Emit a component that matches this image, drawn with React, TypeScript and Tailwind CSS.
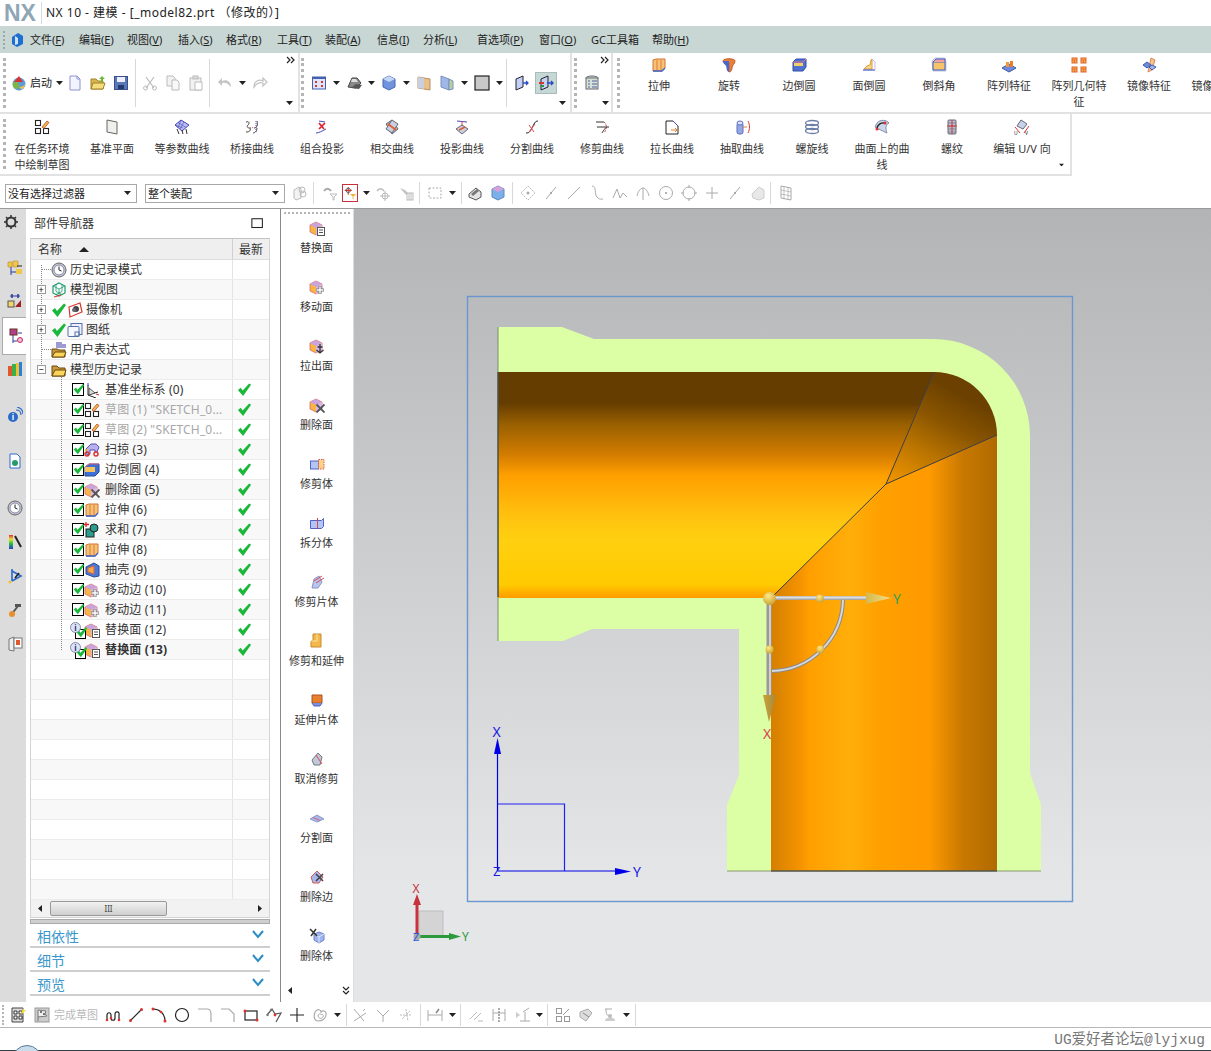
import React from "react";

type P = { children?: React.ReactNode; s?: number; cls?: string };
const Svg = ({ children, s = 16, cls = "" }: P) => (
  <svg width={s} height={s} viewBox="0 0 16 16" className={`shrink-0 ${cls}`}>{children}</svg>
);
const Caret = () => (
  <svg width="7" height="4" viewBox="0 0 7 4" className="shrink-0"><path d="M0 0h7L3.5 4z" fill="#222" /></svg>
);
const Chev = () => (
  <svg width="9" height="8" viewBox="0 0 9 8"><path d="M1 1l3 3-3 3M5 1l3 3-3 3" fill="none" stroke="#222" strokeWidth="1.2" /></svg>
);
const Grip = () => <div className="w-[3px] h-[50px] shrink-0 border-l-[3px] border-dotted border-[#b5b5b5]" />;
const Sep = ({ cls = "" }: { cls?: string }) => <div className={`w-px h-[22px] shrink-0 bg-[#d8d8d8] ${cls}`} />;
const Cell = ({ children, cls = "" }: { children?: React.ReactNode; cls?: string }) => (
  <div className={`w-[23px] shrink-0 flex justify-center items-center ${cls}`}>{children}</div>
);

const cube = (
  <>
    <path d="M1 5l6-3 6 3v7l-6 3-6-3z" fill="#f8b545" stroke="#db6a6a" strokeWidth=".8" />
    <path d="M1 5l6-3 6 3-6 3z" fill="#c9a3de" />
    <path d="M7 8v7l6-3V5z" fill="#d8b6e8" />
  </>
);
const oRep = <><rect x="8.5" y="7.5" width="7" height="8" fill="#fff" stroke="#555" /><path d="M10 10h4M10 12.5h4" stroke="#555" /></>;
const oMove = <><path d="M11 7v8M7 11h8" stroke="#777" strokeWidth="3" /><path d="M11 7.5v7M7.5 11h7" stroke="#fff" strokeWidth="1.4" /></>;
const oPull = <path d="M11 6v9M8.5 9h5M7.5 12l3.5 3 3.5-3" fill="none" stroke="#333" strokeWidth="1.3" />;
const oDel = <path d="M7.5 7.5l8 8M15.5 7.5l-8 8" stroke="#555" strokeWidth="1.8" />;

const ic: Record<string, React.ReactNode> = {
  replace: <>{cube}{oRep}</>,
  moveF: <>{cube}{oMove}</>,
  pull: <>{cube}{oPull}</>,
  delF: <>{cube}{oDel}</>,
  trimBody: <><rect x="1.5" y="5" width="8" height="8" fill="#b4c4f4" stroke="#4f63c8" /><rect x="9.5" y="3.5" width="5.5" height="9.5" fill="#fbd38a" stroke="#d9584f" strokeDasharray="1.5 1" /></>,
  split: <><path d="M1.5 5.5h11l2-2v8l-2 2h-11z" fill="#b4c4f4" stroke="#4f63c8" /><path d="M8.5 3v11" stroke="#d9484f" /></>,
  trimSheet: <><path d="M5 5l5-3 3 6-4 6H3z" fill="#b7c5f0" stroke="#8b96c4" /><path d="M5 7l8-5M7 9l8-5" stroke="#d9484f" /></>,
  trimExt: <><path d="M4 1h8v13H2V8h2z" fill="#f5b74a" stroke="#c98a2c" /><path d="M8 1v7H2" fill="none" stroke="#f7e3a7" /></>,
  extSheet: <><path d="M3 3h10v8H3z" fill="#e87e2e" stroke="#a85520" /><path d="M3 11l2 3h6l2-3" fill="#7f8fd8" stroke="#4f63c8" /></>,
  untrim: <><path d="M3 9l6-7 4 4-2 8-6 0z" fill="#c0c8dc" stroke="#777" /><path d="M7 4l6 9" stroke="#d9484f" /></>,
  divF: <><path d="M1 9l7-4 7 4-7 3z" fill="#a9b6ec" stroke="#8f9cc8" /><path d="M4 7.5l7 3" stroke="#d9484f" strokeWidth=".7" /></>,
  delEdge: <><path d="M2 8l6-6 6 6-4 6H4z" fill="#a9b6ec" stroke="#d9584f" /><path d="M7 5l7 7M14 5l-7 7" stroke="#444" strokeWidth="1.6" /></>,
  delBody: <><path d="M5 6l5-2 5 2v6l-5 3-5-3z" fill="#9db4ec" stroke="#6b82cc" /><path d="M10 9v6M5 6l5 3 5-3" fill="none" stroke="#dfe7fb" /><path d="M1 1l7 7M7 1L2 8" stroke="#333" strokeWidth="1.5" /></>,
  extrude: <><path d="M2 3l3-1h9v9l-3 3H2z" fill="#f5c27a" stroke="#d6732e" /><path d="M6 3v10M10 3v10" stroke="#e17d2e" /><path d="M2 14h9l3-3" fill="none" stroke="#3f63c8" strokeWidth="1.4" /></>,
  revolve: <><path d="M2 4c0-3 12-3 12 0 0 3-3 4-3 7 0 2-1 4-3 4V6C5 6 2 6 2 4z" fill="#e8803a" stroke="#c65a2c" /><path d="M2 4c0 3 2 3 3 5s0 5 3 6V4z" fill="#4a66cc" /></>,
  blend: <><path d="M2 5l3-3h10v8l-3 4H2z" fill="#5072cf" stroke="#2f4ea8" /><path d="M3 6h9v3H3z" fill="#f6cf6a" /><path d="M2 5h10l3-3" fill="none" stroke="#e9738a" /></>,
  faceBlend: <><path d="M11 2v10H3l3-3 3-1 1-5z" fill="#f8d98e" stroke="#d79a3a" /><path d="M2 13h12" stroke="#4f63c8" strokeWidth="1.3" /><path d="M11 2l3 3v8" fill="none" stroke="#c8b6e8" /></>,
  chamfer: <><path d="M1 4l3-3h10l1 4v9H2z" fill="#dbe6fb" stroke="#88a" strokeWidth=".5" /><path d="M2 5h12v8H2z" fill="#f7c46a" stroke="#3f63c8" /><path d="M2 5l3-3h9v3" fill="#f4a0a0" stroke="#3f63c8" /></>,
  patF: <><path d="M1 11l7-4 7 4-7 4z" fill="#6f8ad8" stroke="#3f5ab0" /><rect x="5" y="5" width="3" height="5" fill="#f59a35" /><rect x="9" y="4" width="3" height="6" fill="#e87e2e" /></>,
  patG: <>{[[1, 1], [10, 1], [1, 10], [10, 10]].map(([x, y], i) => <g key={i}><rect x={x} y={y} width="5" height="5" fill="#f9a84b" stroke="#e0642e" /><path d={`M${x} ${y + 2}h5M${x + 2.5} ${y + 2}v3`} stroke="#e0642e" strokeWidth=".7" /></g>)}</>,
  mirrorF: <><path d="M10 1l4 2-3 10-4 2z" fill="#f4c28a" stroke="#d98a5a" /><path d="M2 8l4-3 4 3-4 3z" fill="#6f8ad8" stroke="#3f5ab0" /><path d="M8 10l3-2 4 2-4 3z" fill="#9db4ec" stroke="#3f5ab0" /></>,
  sketch: <><g fill="#fff" stroke="#222" strokeWidth="1.1"><rect x="1.5" y="1.5" width="5" height="5" /><rect x="1.5" y="9.5" width="5" height="5" /><rect x="9.5" y="9.5" width="5" height="5" /></g><path d="M8 8l5-6 2 1.5-5 6z" fill="#f1b94a" stroke="#b9492e" strokeWidth=".8" /></>,
  plane: <path d="M3 1l10 2v12L3 13z" fill="#eef0ec" stroke="#666" />,
  iso: <><path d="M1 6l6-5 8 5-7 6z" fill="#b8bdf2" stroke="#4a46b8" /><path d="M4 3.5l8 5M7 1l-3 8M10 3l-4 7M1 6l8 3" stroke="#4a46b8" strokeWidth=".6" /><path d="M3 10l2 5M8 11l1 4M12 10l1 5" stroke="#333" /></>,
  bridge: <><path d="M2 3c3-1 4 1 2 3s0 3 2 3M2 13c3 0 5-1 4-4M10 9c3 0 4-3 3-7M9 14c1 0 4-1 4-5" fill="none" stroke="#444" /><path d="M6 9c2 0 2-1 4 0" stroke="#d9484f" fill="none" strokeDasharray="1 1" /><path d="M12 2v12" stroke="#4a46b8" strokeDasharray="1 1" /></>,
  combo: <><path d="M5 2l6 1" stroke="#4a46b8" /><path d="M2 14c3 0 6-2 10-4" fill="none" stroke="#4a46b8" /><path d="M5 4l5 6M11 4l-6 6" stroke="#e0202e" strokeWidth="1.7" /></>,
  inter: <><path d="M2 5l6-4 6 9-6 5z" fill="#b6bccb" stroke="#667" /><path d="M8 1l6 4-6 9-6-4z" fill="#c8cfe0" stroke="#667" /><path d="M4 5l8 6" stroke="#e05a2e" strokeWidth="1.6" /></>,
  proj: <><path d="M3 2l10 1" stroke="#4a46b8" /><path d="M8 2v6" stroke="#d9484f" /><path d="M2 10l6-4 6 4-6 5z" fill="#c8cfe0" stroke="#667" /><path d="M5 11l6-3" stroke="#e05a2e" strokeWidth="1.5" /></>,
  divide: <><path d="M2 14c3 0 4-1 6-5s3-7 6-7" fill="none" stroke="#222" /><path d="M5 6l5 7M11 5l-6 8" stroke="#d9484f" /></>,
  trim: <><path d="M2 3h8M3 8h12" stroke="#333" /><path d="M10 3c3 2 3 7 0 11" fill="none" stroke="#d9484f" strokeDasharray="2 1" /><path d="M8 14c1-2 4-6 5-6" stroke="#333" fill="none" /></>,
  extend: <><path d="M2 15V2h7l5 5v8z" fill="#fff" stroke="#222" /><path d="M9 2l5 5" stroke="#4a46b8" /><path d="M7 11h6M11 9l2 2-2 2" fill="none" stroke="#e8802e" /></>,
  extract: <><rect x="3" y="4" width="6" height="11" rx="2" fill="#95a8e4" stroke="#5a6ec0" /><ellipse cx="6" cy="4" rx="3" ry="2" fill="#dbe3fb" stroke="#5a6ec0" /><path d="M14 2c2 4 2 8 0 12" fill="none" stroke="#e0342e" /><path d="M9 8h4" stroke="#e8802e" /></>,
  helix: <><ellipse cx="8" cy="4" rx="6.5" ry="2.5" fill="none" stroke="#6d7ea8" strokeWidth="1.3" /><ellipse cx="8" cy="8" rx="6.5" ry="2.5" fill="none" stroke="#6d7ea8" strokeWidth="1.3" /><ellipse cx="8" cy="12" rx="6.5" ry="2.5" fill="none" stroke="#6d7ea8" strokeWidth="1.3" /></>,
  onSurf: <><path d="M3 4c3-4 10-3 12 0-3 1-4 5-2 10-4-2-9-4-12-6z" fill="#cdd7ea" stroke="#7f8cb0" /><path d="M3 10C3 6 7 3 11 4" fill="none" stroke="#222" strokeWidth="1.3" /><circle cx="11" cy="4" r="1.5" fill="#d9342e" /><circle cx="3" cy="10" r="1.5" fill="#d9342e" /></>,
  thread: <><rect x="4" y="1" width="8" height="14" rx="1" fill="#b6bfd4" stroke="#667" /><path d="M4 4h8M4 7h8M4 10h8M4 13h8" stroke="#778" strokeWidth=".7" /><path d="M8 1v14" stroke="#d9342e" /><path d="M3 7h10" stroke="#d9342e" /></>,
  uv: <><path d="M7 1l6 4-4 5-6-3z" fill="#c8d2ea" stroke="#667" /><path d="M1 8l5 6M15 7l-5 7" stroke="#d9342e" /><text x="0" y="16" fontSize="5" fill="#222">U</text><text x="11" y="16" fontSize="5" fill="#222">V</text></>,
  globe: <><circle cx="8" cy="9" r="6.5" fill="#5b9bd8" /><path d="M2 8c2-3 5-1 6 1s-1 5-3 5-4-3-3-6z" fill="#7fb548" /><path d="M3 7L8 1l4 6z" fill="#d9342e" /><path d="M8 12c3 0 5-1 6-3 0 3-2 5-4 5z" fill="#f0c24a" /></>,
  doc: <><path d="M3 1h7l3 3v11H3z" fill="#f3f4ff" stroke="#8d95d0" /><path d="M10 1v3h3" fill="none" stroke="#8d95d0" /></>,
  folderO: <><path d="M1 4h5l2 2h5v8H1z" fill="#d9b44a" stroke="#a0822c" /><path d="M1 14l2-6h12l-2 6z" fill="#f5dc7c" stroke="#a0822c" /><path d="M9 4l3-3 3 3h-2v3h-2V4z" fill="#6cba3a" /></>,
  save: <><rect x="1.5" y="1.5" width="13" height="13" fill="#5a78b8" stroke="#3a5088" /><rect x="4" y="2" width="8" height="5" fill="#eef" /><rect x="5" y="10" width="6" height="4" fill="#233a70" /></>,
  cut: <><path d="M4 13l8-11M12 13L4 2" stroke="#bbb" strokeWidth="1.2" /><circle cx="3.5" cy="13" r="2" fill="none" stroke="#bbb" /><circle cx="12.5" cy="13" r="2" fill="none" stroke="#bbb" /></>,
  copy: <><path d="M2 1h6l2 2v8H2z" fill="#f2f2f2" stroke="#bbb" /><path d="M7 5h5l2 2v8H7z" fill="#f8f8f8" stroke="#bbb" /></>,
  paste: <><rect x="2" y="3" width="11" height="12" fill="#f2f2f2" stroke="#bbb" /><rect x="5" y="1" width="5" height="3" fill="#ddd" stroke="#bbb" /><path d="M7 7h7v8H7z" fill="#fff" stroke="#bbb" /></>,
  undo: <path d="M14 12C14 6 9 4 5 6V3L1 7l4 4V8c3-1 6 0 9 4z" fill="#c4c4c4" />,
  redo: <path d="M2 12C2 6 7 4 11 6V3l4 4-4 4V8C8 7 5 8 2 12z" fill="none" stroke="#c4c4c4" strokeWidth="1.3" />,
  view: <><rect x="1.5" y="2" width="13" height="12" fill="#dfe6fb" stroke="#4560b0" /><rect x="1.5" y="2" width="13" height="2" fill="#4560b0" /><path d="M4 6h2v2H4zM10 6h2v2h-2zM4 10h2v2H4zM10 10h2v2h-2z" fill="#d9342e" /></>,
  shade: <><path d="M1 12l4-9h5l4 5-5 5z" fill="#888" stroke="#444" /><path d="M9 9l6 1-3 4-8-1z" fill="#555" /><path d="M5 4h4l2 3H4z" fill="#ddd" /></>,
  box: <><path d="M2 4l6-3 6 3v8l-6 3-6-3z" fill="#6f93dd" stroke="#4a66b0" /><path d="M2 4l6 3 6-3-6-3z" fill="#c5d5f5" /></>,
  sect: <><path d="M2 2l12 2v11L2 13z" fill="#e8c088" stroke="#b89060" /><path d="M2 2l6 1v11l-6-1z" fill="#c8cfe0" /></>,
  sect2: <><path d="M2 1l8 3v11l-8-3z" fill="#9fb8e8" stroke="#7a8fc0" /><path d="M10 4l4 2v8l-4 1z" fill="#b8d0a0" stroke="#7a8fc0" /></>,
  blackBox: <rect x="1" y="1" width="14" height="14" fill="#c8c8c8" stroke="#222" strokeWidth="1.2" />,
  door: <><path d="M3 4l7-3v11l-7 3z" fill="#c5d0f5" stroke="#223" /><path d="M10 8h5M13 6l2 2-2 2" fill="none" stroke="#2a4ac8" strokeWidth="1.3" /></>,
  door2: <><path d="M3 4l7-3v11l-7 3z" fill="#c5d0f5" stroke="#223" /><path d="M1 8h5" stroke="#d9342e" strokeWidth="2" /><path d="M3 11h3" stroke="#1f9c3a" strokeWidth="2" /><path d="M9 8h6M13 6l2 2-2 2" fill="none" stroke="#2a4ac8" strokeWidth="1.4" /></>,
  layers: <><ellipse cx="8" cy="3" rx="6" ry="2" fill="#cfd8c8" stroke="#667" /><rect x="2" y="3" width="12" height="11" fill="#d8e2d4" stroke="#667" /><path d="M4 6h2M8 6h5M4 9h2M8 9h5M4 12h2M8 12h5" stroke="#5060a0" /></>,
  ghost: <><path d="M2 5l5-3 2 2v9l-5 2-2-2z" fill="#f2f2f2" stroke="#bbb" /><circle cx="10" cy="5" r="3" fill="none" stroke="#bbb" /><circle cx="11" cy="9" r="3" fill="none" stroke="#bbb" /></>,
  filter: <><path d="M2 6c2-3 5-3 7 0" fill="none" stroke="#aaa" strokeWidth="2" /><path d="M8 9h7l-3 3v3h-1v-3z" fill="none" stroke="#bbb" /></>,
  filter2: <><path d="M6 1v9M2 5h8" stroke="#d9342e" strokeWidth="1.2" /><circle cx="6" cy="5" r="2.5" fill="none" stroke="#555" /><path d="M8 9h7l-3 3v3h-1v-3z" fill="#efb32e" /></>,
  snapCurve: <><path d="M2 6c2-3 5-3 7 0" fill="none" stroke="#bbb" strokeWidth="1.5" /><circle cx="10" cy="11" r="3" fill="none" stroke="#bbb" /><path d="M10 6v10M5 11h10" stroke="#bbb" /></>,
  snapBlock: <><path d="M2 3l5 2 3 3-2 2z" fill="#c4c4c4" /><rect x="9" y="8" width="6" height="7" fill="none" stroke="#bbb" /><path d="M11 8v7M13 8v7" stroke="#bbb" /></>,
  dash: <rect x="2" y="3" width="12" height="10" fill="none" stroke="#aaa" strokeDasharray="2 1.5" />,
  hood: <><path d="M2 9l7-6 5 4v5l-5 3-7-3z" fill="#e4e4e4" stroke="#555" /><path d="M4 9l6-5 2 2-6 5z" fill="#777" /></>,
  cubeB: <><path d="M2 4l6-3 6 3v8l-6 3-6-3z" fill="#7cb0e8" stroke="#5a8ac0" /><path d="M2 4l6 3 6-3-6-3z" fill="#d8a0d8" /></>,
  netGray: <><path d="M8 1l7 7-7 7-7-7z" fill="none" stroke="#bbb" strokeDasharray="2 1" /><circle cx="8" cy="8" r="1.5" fill="#aaa" /></>,
  lineG: <><path d="M3 14L13 2" stroke="#aaa" /><circle cx="8" cy="8" r="1" fill="#999" /></>,
  lineG2: <path d="M2 14L14 2" stroke="#aaa" />,
  curveG: <path d="M3 1c5 0 2 8 5 11s3 2 6 2" fill="none" stroke="#aaa" />,
  zigG: <path d="M1 13l4-9 3 9 3-5 4 4" fill="none" stroke="#aaa" />,
  arrowsG: <path d="M8 15V3M2 11c1-5 4-8 6-8s5 3 6 8" fill="none" stroke="#aaa" />,
  cirC: <><circle cx="8" cy="8" r="6.5" fill="none" stroke="#aaa" /><circle cx="8" cy="8" r="1" fill="#999" /></>,
  cirP: <><circle cx="8" cy="8" r="6" fill="none" stroke="#aaa" /><path d="M8 0v3M8 13v3M0 8h3M13 8h3" stroke="#aaa" /></>,
  plusG: <path d="M8 2v12M2 8h12" stroke="#aaa" />,
  hoodG: <path d="M2 9l7-7 5 3v8l-5 2-6-2z" fill="#e8e8e8" stroke="#ccc" />,
  grid: <><path d="M3 1l10 2v12L3 13z" fill="#fff" stroke="#aaa" /><path d="M3 5l10 2M3 9l10 2M6 2v12M10 2v12" stroke="#aaa" strokeWidth=".7" /></>,
  clock: <><circle cx="8" cy="8" r="7" fill="#c8ccd8" stroke="#666" /><circle cx="8" cy="8" r="5" fill="#fff" stroke="#88a" /><path d="M8 4.5V8l2.5 1" fill="none" stroke="#222" /></>,
  modelV: <><path d="M8 1l6 3v7l-6 3-6-3V4z" fill="#fff" stroke="#1d9a6c" strokeWidth="1.2" /><path d="M2 4l6 3 6-3M8 7v7M5 2.5v7l6 3M11 2.5v7l-6 3" fill="none" stroke="#1d9a6c" strokeWidth=".8" /><path d="M3 15l7-2" stroke="#e0342e" /></>,
  camera: <><path d="M2 5l11-4 2 9-12 5z" fill="#fff" stroke="#d9342e" strokeWidth="1.2" /><circle cx="9" cy="7" r="3" fill="#444" /><circle cx="7" cy="8" r="2" fill="#667" /></>,
  drawing: <><rect x="4" y="1.5" width="11" height="11" fill="#eef" stroke="#5570a8" /><rect x="1" y="4.5" width="11" height="10" rx="1" fill="#f7f8ff" stroke="#5570a8" /><rect x="8" y="10" width="4" height="4" fill="none" stroke="#5570a8" /></>,
  folder: <><path d="M1 4h5l2 2h6v8H1z" fill="#c8983a" stroke="#6a4a10" /><path d="M1 14l3-6h11l-2 6z" fill="#fbd45c" stroke="#6a4a10" /></>,
  folderX: <><path d="M5 1h6M5 3h10M5 5h10" stroke="#3a3aa8" /><path d="M1 7h5l2 1h6v7H1z" fill="#c8983a" stroke="#6a4a10" /><path d="M1 15l3-5h11l-2 5z" fill="#fbd45c" stroke="#6a4a10" /></>,
  csys: <><path d="M4 13L4 3M4 13l10-3M4 13l8 3" stroke="#222" /><path d="M4 1v3" stroke="#2a4ac8" /><path d="M5 6l6 5-6 2z" fill="#ddd" stroke="#555" /><path d="M12 12l3 1" stroke="#d9342e" /></>,
  sweep: <><path d="M2 7l5-5h5l3 3-2 5h-2V8H6v4L3 13z" fill="#b8b0f0" stroke="#5a50b8" /><circle cx="3" cy="12" r="2" fill="none" stroke="#e0342e" strokeWidth="1.5" /><circle cx="12" cy="12" r="2" fill="none" stroke="#e0342e" strokeWidth="1.5" /><path d="M1 9l3-2" stroke="#f0c02e" strokeWidth="1.3" /></>,
  blendT: <><path d="M1 5l4-3h10v8l-4 4H1z" fill="#3c6fd8" stroke="#264a98" /><path d="M1 5h10v5H1z" fill="#f6c45e" /><path d="M1 5l4-3h10" fill="none" stroke="#e06a8a" /></>,
  unite: <><rect x="2" y="7" width="8" height="8" fill="#2a9d8f" stroke="#222" /><circle cx="10" cy="6" r="4" fill="#2a9d8f" stroke="#222" /><path d="M2 0v5M0 2.5h5" stroke="#e0202e" strokeWidth="1.3" /></>,
  shell: <><path d="M2 5l8-4 5 3v10l-5 1-8-3z" fill="#4a78d8" stroke="#2a4a98" /><path d="M4 6l6-2v8l-6-2z" fill="#f8a848" stroke="#d9643a" /></>,
  max: <rect x="1" y="2" width="12" height="10" fill="#fff" stroke="#222" strokeWidth="1.2" />,
  tab1: <><path d="M6 1h5v6H6zM1 2h4v5H1z" fill="#f0c848" stroke="#b88a2c" strokeWidth=".6" /><path d="M4 7v8M4 12h6" stroke="#2a3a98" /><rect x="9" y="9" width="6" height="5" fill="#f0c848" /><path d="M10 6h5" stroke="#222" /></>,
  tab2: <><path d="M5 1v4M11 1v4" stroke="#2a3a98" strokeWidth="1.5" /><path d="M3 3h10" stroke="#2a3a98" /><rect x="1" y="8" width="6" height="6" fill="#f2d86a" stroke="#555" /><path d="M8 14l6-7v7z" fill="#a0201e" /></>,
  tab3: <><rect x="3" y="1" width="7" height="6" fill="#b0408a" stroke="#632" /><path d="M6 7v8M6 13h4M11 5h4" stroke="#2a3a98" /><circle cx="13" cy="12" r="2.5" fill="#f4c0d0" stroke="#c02a6a" /></>,
  tab4: <><rect x="1" y="5" width="4" height="10" fill="#e0582e" /><rect x="5" y="3" width="4" height="12" fill="#3ab04a" /><rect x="9" y="2" width="3" height="13" fill="#f0c02e" /><rect x="12" y="1" width="3" height="14" fill="#2a80d8" /></>,
  tab5: <><circle cx="6" cy="10" r="5" fill="#2a6ac8" /><text x="6" y="13" fontSize="8" fill="#fff" textAnchor="middle" fontWeight="700">i</text><path d="M9 3c3 0 5 2 5 5M10 0c4 1 6 4 6 7" fill="none" stroke="#2a6ac8" strokeWidth="1.2" /></>,
  tab6: <><path d="M3 1h7l3 3v11H3z" fill="#fff" stroke="#2a6ac8" /><circle cx="8" cy="10" r="3" fill="#2a9a6a" /></>,
  tab7: <><rect x="2" y="1" width="4" height="14" fill="url(#rb)" /><path d="M8 2l6 11" stroke="#222" strokeWidth="2" /></>,
  tab8: <><path d="M5 1v12M5 13l9-5L5 3" fill="none" stroke="#2a6ac8" strokeWidth="1.6" /><path d="M8 10l4-5" stroke="#222" strokeWidth="1.6" /><circle cx="3" cy="14" r="1.5" fill="#f0c02e" /></>,
  tab9: <><path d="M4 13l7-9" stroke="#555" strokeWidth="2" /><path d="M8 2h6v3H8z" fill="#555" /><circle cx="5" cy="12" r="3" fill="#e8902e" /></>,
  tab10: <><path d="M2 3l5-2v14l-5-1z" fill="#eee" stroke="#777" /><rect x="7" y="2" width="8" height="10" fill="#fff" stroke="#777" /><rect x="9" y="4" width="4" height="5" fill="#e0582e" /></>,
  gear: <><circle cx="8" cy="8" r="4.5" fill="none" stroke="#333" strokeWidth="2" /><path d="M8 1v3M8 12v3M1 8h3M12 8h3M3 3l2 2M11 11l2 2M13 3l-2 2M5 11l-2 2" stroke="#333" strokeWidth="1.5" /></>,
  skNew: <><path d="M2 1h11v14H2z" fill="#ddd" stroke="#444" /><path d="M4 4h3v3H4zM9 4h3v3H9zM4 9h3v3H4zM9 9h3v3H9z" fill="#fff" stroke="#333" /><path d="M13 1l1 2 2 0-2 2v2l-1-1-2 1 1-3z" fill="#f4dc3a" /></>,
  flag: <><rect x="1" y="1" width="14" height="14" fill="#ccc" stroke="#999" /><path d="M4 3v11M4 3l8 1-1 3 2 2-9 1" fill="#eee" stroke="#777" /><path d="M6 4h2v2H6zM9 6h2v2H9z" fill="#777" /></>,
  sProfile: <><path d="M2 13V8c0-3 4-3 4 0v3c0 3 4 3 4 0V7c0-3 5-3 4 1v5" fill="none" stroke="#222" strokeWidth="1.2" /><g fill="#d9342e"><circle cx="2" cy="13" r="1.3" /><circle cx="6" cy="11" r="1.3" /><circle cx="14" cy="13" r="1.3" /></g></>,
  sLine: <><path d="M2 14L14 2" stroke="#222" strokeWidth="1.1" /><circle cx="2.5" cy="13.5" r="1.5" fill="#d9342e" /><circle cx="13.5" cy="2.5" r="1.5" fill="#d9342e" /></>,
  sArc: <><path d="M2 2c6 0 12 4 12 12" fill="none" stroke="#222" strokeWidth="1.2" /><circle cx="2" cy="2" r="1.5" fill="#d9342e" /><circle cx="14" cy="14" r="1.5" fill="#d9342e" /><circle cx="10" cy="5" r="1.3" fill="#d9342e" /></>,
  sCircle: <circle cx="8" cy="8" r="6.5" fill="none" stroke="#222" strokeWidth="1.2" />,
  sFillet: <path d="M1 2h9c3 0 4 2 4 5v8" fill="none" stroke="#aaa" strokeWidth="1.2" />,
  sChamfer: <path d="M1 2h8l5 5v8" fill="none" stroke="#aaa" strokeWidth="1.2" />,
  sRect: <><rect x="2" y="4" width="12" height="9" fill="none" stroke="#222" strokeWidth="1.2" /><circle cx="2" cy="4" r="1.5" fill="#d9342e" /><circle cx="14" cy="13" r="1.5" fill="#d9342e" /></>,
  sPoly: <><path d="M1 8l5-6 3 5 6-1-5 9" fill="none" stroke="#555" strokeWidth="1.2" /><g fill="#d9342e"><circle cx="9" cy="8" r="1.4" /><circle cx="5" cy="3" r="1.2" fill="#777" /><circle cx="1.5" cy="8" r="1.2" fill="#777" /></g></>,
  sCross: <path d="M8 1v14M1 8h14" stroke="#222" strokeWidth="1.1" />,
  sOff: <><path d="M3 5c3-4 6-2 6 0 2-2 6-1 5 3-1 5-4 6-8 6-3 0-5-3-3-9z" fill="none" stroke="#aaa" strokeWidth="1.2" /><path d="M6 8c2-2 3-1 3 0 1-1 3-1 2 2-1 2-5 2-5-2z" fill="none" stroke="#aaa" /></>,
  sX1: <path d="M2 2l10 12M14 6L2 14M11 4l2-2" fill="none" stroke="#aaa" />,
  sX2: <path d="M2 3l6 6v6M14 3L8 9" fill="none" stroke="#aaa" />,
  sX3: <path d="M2 8h12M8 2l2 12M12 4l-8 8" fill="none" stroke="#bbb" strokeDasharray="2 1" />,
  sDim: <><path d="M1 3v11M15 3v11M1 8h14" stroke="#aaa" /><path d="M9 6l3-4" stroke="#888" strokeWidth="1.5" /></>,
  sPar: <path d="M2 12l7-7M6 13l7-7M10 14h5" stroke="#bbb" />,
  sSym: <><path d="M2 2v12M14 2v12M2 6h12" stroke="#aaa" /><path d="M8 1v14" stroke="#888" strokeWidth="1.4" strokeDasharray="2 1" /></>,
  sTri: <><path d="M1 5l4 3-4 3z" fill="#ccc" /><path d="M10 14V5M5 14h10M8 5l6-4" stroke="#aaa" /></>,
  sSk: <><g fill="#fff" stroke="#999"><rect x="1.5" y="1.5" width="5" height="5" /><rect x="1.5" y="9.5" width="5" height="5" /><rect x="9.5" y="9.5" width="5" height="5" /></g><path d="M8 8l6-6" stroke="#999" /></>,
  sGr: <><path d="M2 5l8-3 4 4-6 8-6-4z" fill="#ddd" stroke="#aaa" /><path d="M5 6l6 4" stroke="#888" /></>,
  sGr2: <><path d="M4 2h7M5 2c0 5 1 7 4 7" fill="none" stroke="#aaa" /><path d="M4 14c0-4 10-5 10 0z" fill="#ccc" /><circle cx="9" cy="9" r="2" fill="#bbb" /></>,
};
const Ic = ({ n, s = 16, cls = "" }: { n: string; s?: number; cls?: string }) => <Svg s={s} cls={cls}>{ic[n]}</Svg>;

const Check = ({ s = 14 }: { s?: number }) => (
  <Svg s={s}><path d="M1 8.5l3-2.5 2 3L13 1.5l2 1.500L6.500 15z" fill="#19b83a" /></Svg>
);

const Topcols = [
  ["extrude", "拉伸"], ["revolve", "旋转"], ["blend", "边倒圆"], ["faceBlend", "面倒圆"], ["chamfer", "倒斜角"],
  ["patF", "阵列特征"], ["patG", "阵列几何特征"], ["mirrorF", "镜像特征"], ["mirrorF", "镜像几何体"],
];
const Secondcols = [
  ["sketch", "在任务环境中绘制草图"], ["plane", "基准平面"], ["iso", "等参数曲线"], ["bridge", "桥接曲线"], ["combo", "组合投影"],
  ["inter", "相交曲线"], ["proj", "投影曲线"], ["divide", "分割曲线"], ["trim", "修剪曲线"], ["extend", "拉长曲线"],
  ["extract", "抽取曲线"], ["helix", "螺旋线"], ["onSurf", "曲面上的曲线"], ["thread", "螺纹"], ["uv", "编辑 U/V 向"],
];
const Col = ({ n, t, gap }: { n: string; t: string; gap: string }) => (
  <div className="w-[70px] h-[58px] shrink-0 flex flex-col items-center">
    <Ic n={n} />
    <div className={`${gap} w-[62px] text-center text-[11px] leading-[16px] text-[#333]`}>{t}</div>
  </div>
);

const menus: [string, string, string][] = [
  ["文件", "F", "w-[49px]"], ["编辑", "E", "w-[48px]"], ["视图", "V", "w-[51px]"], ["插入", "S", "w-[48px]"], ["格式", "R", "w-[51px]"],
  ["工具", "T", "w-[48px]"], ["装配", "A", "w-[52px]"], ["信息", "I", "w-[46px]"], ["分析", "L", "w-[54px]"], ["首选项", "P", "w-[62px]"],
  ["窗口", "O", "w-[52px]"], ["GC工具箱", "", "w-[61px]"], ["帮助", "H", "w-[50px]"],
];

const tools = [
  ["replace", "替换面"], ["moveF", "移动面"], ["pull", "拉出面"], ["delF", "删除面"], ["trimBody", "修剪体"], ["split", "拆分体"],
  ["trimSheet", "修剪片体"], ["trimExt", "修剪和延伸"], ["extSheet", "延伸片体"], ["untrim", "取消修剪"], ["divF", "分割面"],
  ["delEdge", "删除边"], ["delBody", "删除体"],
];

type Row = { lvl: 0 | 1; exp?: "+" | "-"; chk?: boolean; ic: string; t: string; grey?: boolean; info?: boolean; bold?: boolean };
const rows: Row[] = [
  { lvl: 0, ic: "clock", t: "历史记录模式" },
  { lvl: 0, exp: "+", ic: "modelV", t: "模型视图" },
  { lvl: 0, exp: "+", chk: true, ic: "camera", t: "摄像机" },
  { lvl: 0, exp: "+", chk: true, ic: "drawing", t: "图纸" },
  { lvl: 0, ic: "folderX", t: "用户表达式" },
  { lvl: 0, exp: "-", ic: "folder", t: "模型历史记录" },
  { lvl: 1, ic: "csys", t: "基准坐标系 (0)" },
  { lvl: 1, ic: "sketch", t: "草图 (1) \"SKETCH_0...", grey: true },
  { lvl: 1, ic: "sketch", t: "草图 (2) \"SKETCH_0...", grey: true },
  { lvl: 1, ic: "sweep", t: "扫掠 (3)" },
  { lvl: 1, ic: "blendT", t: "边倒圆 (4)" },
  { lvl: 1, ic: "delF", t: "删除面 (5)" },
  { lvl: 1, ic: "extrude", t: "拉伸 (6)" },
  { lvl: 1, ic: "unite", t: "求和 (7)" },
  { lvl: 1, ic: "extrude", t: "拉伸 (8)" },
  { lvl: 1, ic: "shell", t: "抽壳 (9)" },
  { lvl: 1, ic: "moveF", t: "移动边 (10)" },
  { lvl: 1, ic: "moveF", t: "移动边 (11)" },
  { lvl: 1, ic: "replace", t: "替换面 (12)", info: true },
  { lvl: 1, ic: "replace", t: "替换面 (13)", info: true, bold: true },
];

const TreeRow = ({ r, i }: { r?: Row; i: number }) => (
  <div className={`h-[20px] flex border-b border-[#ececec] ${i % 2 ? "bg-[#f8f8f8]" : "bg-white"}`}>
    <div className="w-[201px] shrink-0 flex items-center">
      {r && r.lvl === 0 && (
        <>
          <div className="w-[20px] shrink-0 flex justify-center relative z-10">
            {r.exp && (
              <div className="w-[9px] h-[9px] bg-white border border-[#999] flex items-center justify-center text-[9px] leading-[7px] text-black">{r.exp === "+" ? "+" : "−"}</div>
            )}
          </div>
          {r.chk && <Check s={16} />}
          <Ic n={r.ic} />
          <span className="ml-[3px] text-[12px] leading-[20px] text-[#333]">{r.t}</span>
        </>
      )}
      {r && r.lvl === 1 && (
        <>
          <div className="ml-[41px] w-[12px] h-[13px] shrink-0 relative">
            {r.info ? (
              <>
                <div className="absolute left-[3px] top-[6px] w-[11px] h-[10px] border border-black bg-white" />
                <div className="absolute left-[4px] top-[3px]"><Check s={12} /></div>
                <div className="absolute left-[-2px] top-[-1px] w-[11px] h-[11px] rounded-full bg-[#dfe4f0] border border-[#7f8cb0] text-[8px] leading-[9px] font-bold text-center text-[#223a88]">i</div>
              </>
            ) : (
              <>
                <div className="absolute inset-0 border border-black bg-white" />
                <div className="absolute left-[1px] top-[0px]"><Check s={12} /></div>
              </>
            )}
          </div>
          <Ic n={r.ic} />
          <span className={`ml-[5px] text-[12px] leading-[20px] tracking-[0.15px] whitespace-nowrap ${r.grey ? "text-[#a8a8a8]" : "text-[#333]"} ${r.bold ? "font-bold" : ""}`}>{r.t}</span>
        </>
      )}
    </div>
    <div className="flex-1 border-l border-[#e4e4e4] flex items-center pl-[4px]">
      {r && r.lvl === 1 && <Check s={15} />}
    </div>
  </div>
);

const Section = ({ t }: { t: string }) => (
  <div className="h-[24px] flex items-center justify-between pt-[3px] pl-[7px] pr-[6px] border-b-2 border-[#cfcfcf]">
    <span className="text-[14px] leading-[19px] text-[#3b97cc]">{t}</span>
    <svg width="12" height="9" viewBox="0 0 12 9" className="mb-[4px]"><path d="M1 1l5 6 5-6" fill="none" stroke="#2a8cc4" strokeWidth="2" /></svg>
  </div>
);

const TabI = ({ n, cls }: { n: string; cls: string }) => (
  <div className={`flex justify-center pl-[4px] ${cls}`}><Ic n={n} /></div>
);

const Model = () => (
  <svg viewBox="354 208 857 794" width="857" height="794" className="absolute left-0 top-[-1px]">
    <defs>
      <linearGradient id="hg" gradientUnits="userSpaceOnUse" x1="0" y1="372" x2="0" y2="597">
        <stop offset="0" stopColor="#663d00" /><stop offset=".138" stopColor="#663d00" /><stop offset=".235" stopColor="#9a6000" />
        <stop offset=".37" stopColor="#d47d00" /><stop offset=".46" stopColor="#ff9f00" /><stop offset=".66" stopColor="#ffc510" />
        <stop offset=".75" stopColor="#ffd010" /><stop offset=".945" stopColor="#ffca00" /><stop offset="1" stopColor="#ff9f00" />
      </linearGradient>
      <linearGradient id="vg" gradientUnits="userSpaceOnUse" x1="771" y1="0" x2="997" y2="0">
        <stop offset="0" stopColor="#d47f00" /><stop offset=".13" stopColor="#f59300" /><stop offset=".17" stopColor="#ff9f00" />
        <stop offset=".35" stopColor="#ffae0a" /><stop offset=".48" stopColor="#ffa000" /><stop offset=".7" stopColor="#ff9a00" />
        <stop offset=".85" stopColor="#c87800" /><stop offset="1" stopColor="#b06a00" />
      </linearGradient>
      <linearGradient id="cg" gradientUnits="userSpaceOnUse" x1="945" y1="385" x2="890" y2="482">
        <stop offset="0" stopColor="#6b4000" /><stop offset=".3" stopColor="#8a5500" /><stop offset=".6" stopColor="#b87300" /><stop offset="1" stopColor="#f09500" />
      </linearGradient>
      <linearGradient id="cone1" x1="0" y1="0" x2="1" y2="0"><stop offset="0" stopColor="#d6b84a" /><stop offset="1" stopColor="#f4e08a" /></linearGradient>
      <linearGradient id="cone2" x1="0" y1="0" x2="1" y2="0"><stop offset="0" stopColor="#c8a23a" /><stop offset="1" stopColor="#a88a3a" /></linearGradient>
      <radialGradient id="ball" cx=".4" cy=".3" r=".8"><stop offset="0" stopColor="#ffe98a" /><stop offset="1" stopColor="#c49a2a" /></radialGradient>
    </defs>
    <rect x="467.500" y="296.500" width="605" height="605" fill="none" stroke="#6b97cf" strokeWidth="1.4" />
    <path d="M498 327H562L594 339H933A97 97 0 0 1 1030 436V773L1041 805V871H727V805L739 775V629H592L563 641H498Z" fill="#dcffa6" />
    <path d="M498 372H934L886 484L771 598H498Z" fill="url(#hg)" />
    <path d="M771 598L886 484L997 435V871H771Z" fill="url(#vg)" />
    <path d="M934 372A63 63 0 0 1 997 435L886 484Z" fill="url(#cg)" />
    <path d="M498 327V641" stroke="#7d8f6a" />
    <path d="M498 372V597" stroke="#333" />
    <path d="M727 871H1041" stroke="#8a9a70" strokeWidth="1.2" />
    <path d="M771 871H997" stroke="#333" strokeWidth="1.2" />
    <path d="M934 372L886 484L997 435M886 484L771 598" fill="none" stroke="#3a3a40" strokeWidth="1" />
    <path d="M843 600C842 640 810 670 772 671" fill="none" stroke="#8a8a8a" strokeWidth="4" />
    <path d="M843 600C842 640 810 670 772 671" fill="none" stroke="#d8d8d8" strokeWidth="2" />
    <path d="M769 598H867" stroke="#a8a8a8" strokeWidth="4" />
    <path d="M769 597.500H867" stroke="#e0e0e0" strokeWidth="2" />
    <path d="M769 598V696" stroke="#9a9a9a" strokeWidth="5" />
    <path d="M770 598V696" stroke="#d0d0d0" strokeWidth="2" />
    <path d="M866 592L891 598L866 604Z" fill="url(#cone1)" />
    <path d="M763 695H776L769 722Z" fill="url(#cone2)" />
    <circle cx="820" cy="598.500" r="4" fill="url(#ball)" />
    <circle cx="769.500" cy="649.500" r="4" fill="url(#ball)" />
    <circle cx="820.500" cy="649.500" r="4" fill="url(#ball)" />
    <circle cx="769.500" cy="598.500" r="6.500" fill="url(#ball)" />
    <text x="893" y="604" fontSize="14" fill="#2ca05a" fontFamily="Noto Sans">Y</text>
    <text x="763" y="739" fontSize="14" fill="#d9434f" fontFamily="Noto Sans">X</text>

    <path d="M497.500 871V752" stroke="#0000e8" strokeWidth="1.2" />
    <path d="M497.500 738L494 754H501Z" fill="#0000e8" />
    <path d="M497.500 871H620" stroke="#0000e8" strokeWidth="1.2" />
    <path d="M631 871.500L615 868V875Z" fill="#0000e8" />
    <path d="M497.500 804H564.500V871" fill="none" stroke="#2020f0" strokeWidth="1.2" />
    <text x="492.500" y="737" fontSize="14" fill="#1818e0" fontFamily="Noto Sans">X</text>
    <text x="633" y="877" fontSize="14" fill="#1818e0" fontFamily="Noto Sans">Y</text>
    <text x="493" y="876" fontSize="13" fill="#1818e0" fontFamily="Noto Sans">Z</text>

    <rect x="419" y="911" width="24" height="25" fill="#d4d4d4" stroke="#bdbdbd" />
    <path d="M417 936V904" stroke="#c8323c" strokeWidth="3" />
    <path d="M417 894L413 905H421Z" fill="#c8323c" />
    <path d="M420 936.500H450" stroke="#2c9a3c" strokeWidth="3" />
    <path d="M461 936.500L449 933V940Z" fill="#2c9a3c" />
    <circle cx="417" cy="936.500" r="3.500" fill="#aaa" />
    <text x="412.500" y="893" fontSize="12" fill="#c8323c" fontFamily="Noto Sans">X</text>
    <text x="462" y="941" fontSize="12" fill="#2c9a3c" fontFamily="Noto Sans">Y</text>
    <text x="413" y="941" fontSize="11" fill="#2a55e0" fontFamily="Noto Sans">Z</text>
  </svg>
);

export default function App() {
  return (
    <div className="w-[1211px] h-[1051px] overflow-hidden bg-white flex flex-col [font-family:'Noto_Sans','Noto_Sans_CJK_SC',sans-serif] text-[#333]">
      <svg width="0" height="0" className="absolute">
        <defs>
          <linearGradient id="rb" x1="0" y1="0" x2="0" y2="1"><stop offset="0" stopColor="#e0302e" /><stop offset=".3" stopColor="#f0e02e" /><stop offset=".6" stopColor="#2ec03a" /><stop offset="1" stopColor="#2a3ad8" /></linearGradient>
        </defs>
      </svg>
      {/* Title */}
      <div className="h-[26px] shrink-0 flex items-center">
        <span className="ml-[4px] w-[36px] text-[23px] leading-[26px] font-bold text-[#8fa6b6] [font-family:'Liberation_Sans',sans-serif]">NX</span>
        <div className="ml-[1px] w-px h-[22px] bg-[#d5dbe0]" />
        <span className="ml-[4px] text-[12px] leading-[26px] tracking-[0.5px] text-[#222] whitespace-pre">NX 10 - 建模 - [_model82.prt （修改的）]</span>
      </div>
      {/* Menu */}
      <div className="h-[27px] shrink-0 bg-[#c8d6d4] flex items-center">
        <div className="ml-[3px] w-[3px] h-[18px] border-l-[2px] border-dotted border-[#9aa]" />
        <svg width="16" height="16" viewBox="0 0 16 16" className="ml-[3px] shrink-0"><path d="M3 5l6-4 5 3v8l-6 3-5-3z" fill="#1f6fd0" /><path d="M6 4l3 2v6l-3 1z" fill="#cfe3fa" /></svg>
        <div className="ml-[5px] flex">
          {menus.map(([t, k, w]) => (
            <div key={t} className={`${w} shrink-0 text-[11px] leading-[25px] text-[#222] whitespace-nowrap`}>
              {t}{k && <>(<span className="underline">{k}</span>)</>}
            </div>
          ))}
        </div>
      </div>
      {/* Toolbar 1 */}
      <div className="h-[61px] shrink-0 flex border-b-2 border-[#e2e2e2] overflow-hidden">
        <div className="w-[300px] shrink-0 relative flex items-center border-r-2 border-[#e2e2e2]">
          <div className="ml-[3px]"><Grip /></div>
          <Ic n="globe" cls="ml-[5px]" />
          <span className="ml-[3px] w-[24px] text-[11px] leading-[16px] text-[#222]">启动</span>
          <div className="ml-[2px]"><Caret /></div>
          <Cell><Ic n="doc" /></Cell><Cell><Ic n="folderO" /></Cell><Cell><Ic n="save" /></Cell>
          <Sep cls="ml-[3px] !h-[48px]" />
          <Cell cls="ml-[2px]"><Ic n="cut" /></Cell><Cell><Ic n="copy" /></Cell><Cell><Ic n="paste" /></Cell>
          <Sep cls="ml-[2px] !h-[48px]" />
          <Cell cls="ml-[3px]"><Ic n="undo" /></Cell>
          <div className="ml-[3px]"><Caret /></div>
          <Cell cls="ml-[2px]"><Ic n="redo" /></Cell>
          <div className="absolute right-[3px] top-[3px]"><Chev /></div>
          <div className="absolute right-[5px] bottom-[7px]"><Caret /></div>
        </div>
        <div className="w-[272px] shrink-0 relative flex items-center border-r-2 border-[#e2e2e2]">
          <div className="ml-[1px]"><Grip /></div>
          <Cell cls="ml-[3px]"><Ic n="view" /></Cell>
          <div className="ml-[3px]"><Caret /></div>
          <Cell cls="ml-[3px]"><Ic n="shade" /></Cell>
          <div className="ml-[2px]"><Caret /></div>
          <Cell cls="ml-[2px]"><Ic n="box" /></Cell>
          <div className="ml-[3px]"><Caret /></div>
          <Cell cls="ml-[2px]"><Ic n="sect" /></Cell>
          <Cell><Ic n="sect2" /></Cell>
          <div className="ml-[3px]"><Caret /></div>
          <Cell cls="ml-[2px]"><Ic n="blackBox" /></Cell>
          <div className="ml-[3px]"><Caret /></div>
          <Sep cls="ml-[3px] !h-[48px]" />
          <Cell cls="ml-[2px]"><Ic n="door" /></Cell>
          <div className="ml-[3px] w-[22px] h-[22px] shrink-0 bg-[#c5d8d5] border border-[#a8bcb8] flex items-center justify-center"><Ic n="door2" /></div>
          <div className="absolute right-[4px] bottom-[7px]"><Caret /></div>
        </div>
        <div className="w-[41px] shrink-0 relative flex items-center border-r-2 border-[#e2e2e2]">
          <div className="ml-[2px]"><Grip /></div>
          <Ic n="layers" cls="ml-[7px]" />
          <div className="absolute right-[2px] top-[3px]"><Chev /></div>
          <div className="absolute right-[2px] bottom-[7px]"><Caret /></div>
        </div>
        <div className="flex-1 flex items-start overflow-hidden">
          <div className="ml-[4px] mt-[5px]"><Grip /></div>
          <div className="ml-[4px] flex pt-[4px]">
            {Topcols.map(([n, t]) => <Col key={t} n={n} t={t} gap="mt-[5px]" />)}
          </div>
        </div>
      </div>
      {/* Toolbar 2 */}
      <div className="h-[63px] shrink-0">
        <div className="w-[1072px] h-[62px] flex relative border-r-2 border-b-2 border-[#e2e2e2] pt-[5px]">
          <div className="w-[3px] ml-[3px] shrink-0"><Grip /></div>
          <div className="ml-[1px] flex">
            {Secondcols.map(([n, t]) => <Col key={t} n={n} t={t} gap="mt-[6px]" />)}
          </div>
          <div className="absolute right-[5px] bottom-[7px] scale-75"><Caret /></div>
        </div>
      </div>
      {/* Selection bar */}
      <div className="h-[31px] shrink-0 flex items-center pt-[1px]">
        <div className="ml-[5px] w-[132px] h-[19px] border border-[#a8a8a8] flex items-center justify-between pl-[2px] pr-[5px] text-[11px] leading-[17px] text-[#222]">没有选择过滤器<Caret /></div>
        <div className="ml-[8px] w-[140px] h-[19px] border border-[#a8a8a8] flex items-center justify-between pl-[2px] pr-[5px] text-[11px] leading-[17px] text-[#222]">整个装配<Caret /></div>
        <Cell cls="ml-[3px]"><Ic n="ghost" /></Cell>
        <Sep cls="ml-[2px]" />
        <Cell cls="ml-[4px]"><Ic n="filter" /></Cell>
        <div className="ml-[1px] w-[16px] h-[18px] shrink-0 border border-[#c8303a] flex items-center justify-center"><Ic n="filter2" s={14} /></div>
        <div className="ml-[5px]"><Caret /></div>
        <Cell cls="ml-[1px]"><Ic n="snapCurve" /></Cell>
        <Cell><Ic n="snapBlock" /></Cell>
        <Sep cls="ml-[2px]" />
        <Cell cls="ml-[3px]"><Ic n="dash" /></Cell>
        <div className="ml-[3px]"><Caret /></div>
        <Sep cls="ml-[5px]" />
        <Cell cls="ml-[1px]"><Ic n="hood" /></Cell>
        <Cell><Ic n="cubeB" /></Cell>
        <Sep cls="ml-[3px]" />
        <Cell cls="ml-[3px]"><Ic n="netGray" /></Cell>
        <Cell><Ic n="lineG" /></Cell>
        <Cell><Ic n="lineG2" /></Cell>
        <Cell><Ic n="curveG" /></Cell>
        <Cell><Ic n="zigG" /></Cell>
        <Cell><Ic n="arrowsG" /></Cell>
        <Cell><Ic n="cirC" /></Cell>
        <Cell><Ic n="cirP" /></Cell>
        <Cell><Ic n="plusG" /></Cell>
        <Cell><Ic n="lineG" /></Cell>
        <Cell><Ic n="hoodG" /></Cell>
        <Sep cls="ml-[1px]" />
        <Cell cls="ml-[3px]"><Ic n="grid" /></Cell>
      </div>
      {/* Main */}
      <div className="h-[794px] shrink-0 flex border-t border-[#9a9a9a]">
        <div className="w-[26px] shrink-0 bg-[#dcdcdc] flex flex-col">
          <div className="mt-[5px] flex justify-center pr-[4px]"><Ic n="gear" /></div>
          <TabI n="tab1" cls="mt-[30px]" />
          <TabI n="tab2" cls="mt-[17px]" />
          <div className="mt-[8px] ml-[2px] h-[38px] bg-white border border-r-0 border-[#aaa] flex items-center justify-center"><Ic n="tab3" /></div>
          <TabI n="tab4" cls="mt-[6px]" />
          <TabI n="tab5" cls="mt-[30px]" />
          <TabI n="tab6" cls="mt-[30px]" />
          <TabI n="clock" cls="mt-[31px]" />
          <TabI n="tab7" cls="mt-[18px]" />
          <TabI n="tab8" cls="mt-[18px]" />
          <TabI n="tab9" cls="mt-[18px]" />
          <TabI n="tab10" cls="mt-[18px]" />
        </div>
        <div className="w-[255px] shrink-0 bg-white border-r border-[#8a8a8a]">
          <div className="h-[29px] flex items-center justify-between pl-[8px] pr-[15px]">
            <span className="text-[12px] leading-[29px] text-[#333]">部件导航器</span>
            <Ic n="max" s={14} />
          </div>
          <div className="relative ml-[4px] w-[240px] h-[680px] border border-[#d4d4d4] border-t-[#c4c4c4] flex flex-col">
            <div className="h-[21px] shrink-0 flex bg-[#efefef] border-b border-[#dcdcdc] text-[12px] leading-[21px] text-[#333]">
              <div className="w-[201px] shrink-0 flex items-center pl-[7px]">
                名称
                <svg width="10" height="5" viewBox="0 0 10 5" className="ml-[17px]"><path d="M0 5h10L5 0z" fill="#222" /></svg>
              </div>
              <div className="flex-1 border-l border-[#cfcfcf] pl-[6px]">最新</div>
            </div>
            <div className="relative flex-1 overflow-hidden">
              {Array.from({ length: 32 }).map((_, i) => <TreeRow key={i} r={rows[i]} i={i} />)}
              <div className="absolute left-[10px] top-[5px] h-[105px] border-l border-dotted border-[#888]" />
              <div className="absolute left-[10px] top-[9px] w-[10px] border-t border-dotted border-[#888]" />
              <div className="absolute left-[10px] top-[89px] w-[10px] border-t border-dotted border-[#888]" />
              <div className="absolute left-[30px] top-[115px] h-[275px] border-l border-dotted border-[#888]" />
            </div>
            <div className="h-[17px] shrink-0 bg-[#f2f2f2] flex items-center relative">
              <svg width="4" height="7" viewBox="0 0 4 7" className="ml-[7px]"><path d="M4 0v7L0 3.500z" fill="#222" /></svg>
              <div className="ml-[8px] w-[117px] h-[15px] rounded-[2px] border border-[#999] bg-[linear-gradient(#f2f2f2,#cfcfcf)] flex items-center justify-center text-[8px] leading-[8px] text-[#444]">III</div>
              <svg width="4" height="7" viewBox="0 0 4 7" className="absolute right-[7px]"><path d="M0 0v7l4-3.500z" fill="#222" /></svg>
            </div>
          </div>
          <div className="mt-[1px] ml-[4px] w-[240px] h-[5px] bg-[#cfcfcf] border border-[#aaa]" />
          <div className="ml-[4px] w-[240px]">
            <Section t="相依性" />
            <Section t="细节" />
            <Section t="预览" />
          </div>
        </div>
        <div className="w-[73px] shrink-0 bg-white border-r border-[#dcdcdc] flex flex-col items-center">
          <div className="mt-[3px] w-[66px] border-t-2 border-dotted border-[#b5b5b5]" />
          <div className="mt-[3px] w-full pr-[1px]">
            {tools.map(([n, t]) => (
              <div key={t} className="h-[59px] flex flex-col items-center pt-[3px]">
                <Ic n={n} />
                <div className="mt-[4px] text-[11px] leading-[15px] text-[#333] whitespace-nowrap">{t}</div>
              </div>
            ))}
          </div>
          <div className="mt-[2px] w-full flex items-center justify-between pl-[7px] pr-[3px]">
            <svg width="4" height="7" viewBox="0 0 4 7"><path d="M4 0v7L0 3.500z" fill="#222" /></svg>
            <svg width="8" height="9" viewBox="0 0 8 9"><path d="M1 1l3 3 3-3M1 5l3 3 3-3" fill="none" stroke="#222" strokeWidth="1.2" /></svg>
          </div>
        </div>
        <div className="relative flex-1 overflow-hidden bg-[linear-gradient(to_bottom,#b3b4b6_0%,#e5e6e8_85%)]">
          <Model />
        </div>
      </div>
      {/* Bottom toolbar */}
      <div className="h-[26px] shrink-0 flex items-center border-b border-[#b8b8b8]">
        <div className="ml-[2px] w-[3px] h-[20px] border-l-[2px] border-dotted border-[#b5b5b5]" />
        <Ic n="skNew" cls="ml-[5px]" />
        <Ic n="flag" cls="ml-[8px]" />
        <span className="ml-[4px] w-[47px] shrink-0 text-[11px] leading-[16px] text-[#b8b8b8] whitespace-nowrap">完成草图</span>
        <Cell><Ic n="sProfile" /></Cell><Cell><Ic n="sLine" /></Cell><Cell><Ic n="sArc" /></Cell><Cell><Ic n="sCircle" /></Cell>
        <Cell><Ic n="sFillet" /></Cell><Cell><Ic n="sChamfer" /></Cell><Cell><Ic n="sRect" /></Cell><Cell><Ic n="sPoly" /></Cell>
        <Cell><Ic n="sCross" /></Cell><Cell><Ic n="sOff" /></Cell>
        <div className="ml-[3px]"><Caret /></div>
        <Sep cls="ml-[5px]" />
        <Cell cls="ml-[1px]"><Ic n="sX1" /></Cell><Cell><Ic n="sX2" /></Cell><Cell><Ic n="sX3" /></Cell>
        <Sep cls="ml-[3px]" />
        <Cell cls="ml-[2px]"><Ic n="sDim" /></Cell>
        <div className="ml-[3px]"><Caret /></div>
        <Sep cls="ml-[4px]" />
        <Cell cls="ml-[3px]"><Ic n="sPar" /></Cell><Cell><Ic n="sSym" /></Cell><Cell cls="ml-[1px]"><Ic n="sTri" /></Cell>
        <div className="ml-[2px]"><Caret /></div>
        <Sep cls="ml-[4px]" />
        <Cell cls="ml-[3px]"><Ic n="sSk" /></Cell><Cell><Ic n="sGr" /></Cell><Cell><Ic n="sGr2" /></Cell>
        <div className="ml-[3px]"><Caret /></div>
        <Sep cls="ml-[5px]" />
      </div>
      {/* Status */}
      <div className="relative flex-1 flex items-start justify-end border-b-2 border-[#2e3f4a]">
        <span className="mr-[6px] mt-[2px] text-[14.500px] leading-[20px] text-[#777] whitespace-nowrap [font-family:'Liberation_Mono','Noto_Sans_CJK_SC',monospace]">UG爱好者论坛@lyjxug</span>
        <div className="absolute left-[12px] top-[17px] w-[30px] h-[30px] rounded-full bg-[#c8dcec] border border-[#5a7a98]" />
      </div>
    </div>
  );
}
